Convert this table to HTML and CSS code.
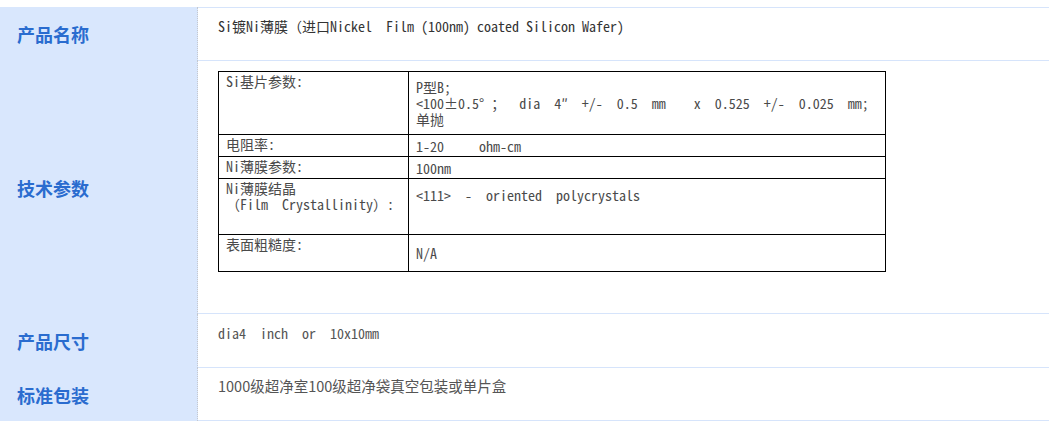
FILE: index.html
```html
<!DOCTYPE html>
<html lang="zh-CN">
<head>
  <meta charset="UTF-8">
  <title>Si镀Ni薄膜 产品参数</title>
  <link rel="stylesheet" href="styles.css">
</head>
<body>
  <!-- Product spec sheet -->
  <table class="spec">
    <tr class="row-name">
      <th class="spec-label">产品名称</th>
      <td class="spec-val mono">Si镀Ni薄膜（进口Nickel  Film (100nm) coated Silicon Wafer)</td>
    </tr>
    <tr class="row-params">
      <th class="spec-label">技术参数</th>
      <td class="spec-val">
        <table class="params">
          <tr class="p1">
            <td class="k">Si基片参数:</td>
            <td class="v">P型B;<br>&lt;100±0.5° ；  dia  4″  +/-  0.5  mm    x  0.525  +/-  0.025  mm;<br>单抛</td>
          </tr>
          <tr class="p2">
            <td class="k">电阻率:</td>
            <td class="v">1-20     ohm-cm</td>
          </tr>
          <tr class="p3">
            <td class="k">Ni薄膜参数:</td>
            <td class="v">100nm</td>
          </tr>
          <tr class="p4">
            <td class="k">Ni薄膜结晶<br>（Film  Crystallinity）:</td>
            <td class="v top">&lt;111&gt;  -  oriented  polycrystals</td>
          </tr>
          <tr class="p5">
            <td class="k">表面粗糙度:</td>
            <td class="v">N/A</td>
          </tr>
        </table>
      </td>
    </tr>
    <tr class="row-size">
      <th class="spec-label">产品尺寸</th>
      <td class="spec-val mono gray">dia4  inch  or  10x10mm</td>
    </tr>
    <tr class="row-pack">
      <th class="spec-label">标准包装</th>
      <td class="spec-val sans">1000级超净室100级超净袋真空包装或单片盒</td>
    </tr>
  </table>
</body>
</html>
```

FILE: styles.css
```css
/* General */
body {
  margin: 0;
  background: #fff;
  font-family: "Noto Sans CJK SC", sans-serif;
}

/* Outer spec table */
.spec {
  border-collapse: separate;
  border-spacing: 0;
  width: 1049px;
  margin-top: 7px;
}

.spec-label,
.spec-val {
  box-sizing: border-box;
}

.spec-label {
  width: 198px;
  padding: 0 0 0 17px;
  background: #d9e7fd;
  border-right: 1px dotted #c4c8cf;
  text-align: left;
  vertical-align: middle;
  color: #2a6ccf;
  font-size: 18px;
  font-weight: bold;
  line-height: 20px;
}

.spec-val {
  padding: 10px 20px 0;
  vertical-align: top;
  border-bottom: 1px solid #d6e4fb;
  color: #333;
  font-size: 14px;
  line-height: 16px;
}

.row-name .spec-val {
  border-top: 1px solid #d6e4fb;
  height: 54px;
}

.row-params .spec-val {
  height: 253px;
}

.row-size .spec-val {
  height: 54px;
  padding-top: 11px;
}

.row-pack .spec-val {
  height: 53px;
}

.mono {
  font-family: "Noto Sans Mono CJK SC", "Liberation Mono", monospace;
  white-space: pre;
}

.gray {
  color: #555;
}

.sans {
  font-family: "Noto Sans CJK SC", sans-serif;
  font-size: 14.5px;
  color: #555;
}

/* Inner parameter table */
.params {
  border-collapse: collapse;
  width: 668px;
  border: 1px solid #000;
  font-family: "Noto Sans Mono CJK SC", "Liberation Mono", monospace;
  font-size: 14px;
  line-height: 16px;
  color: #4a4a4a;
}

.params td {
  border: 1px solid #000;
  padding: 0 7px;
  white-space: pre;
}

.params .k {
  width: 175px;
  vertical-align: top;
  padding-top: 1px;
}

.params .v {
  vertical-align: middle;
}

.params .v.top {
  vertical-align: top;
  padding-top: 8px;
}

.p1 { height: 63px; }
.p2 { height: 22px; }
.p3 { height: 22px; }
.p4 { height: 56px; }
.p5 { height: 37px; }
```
